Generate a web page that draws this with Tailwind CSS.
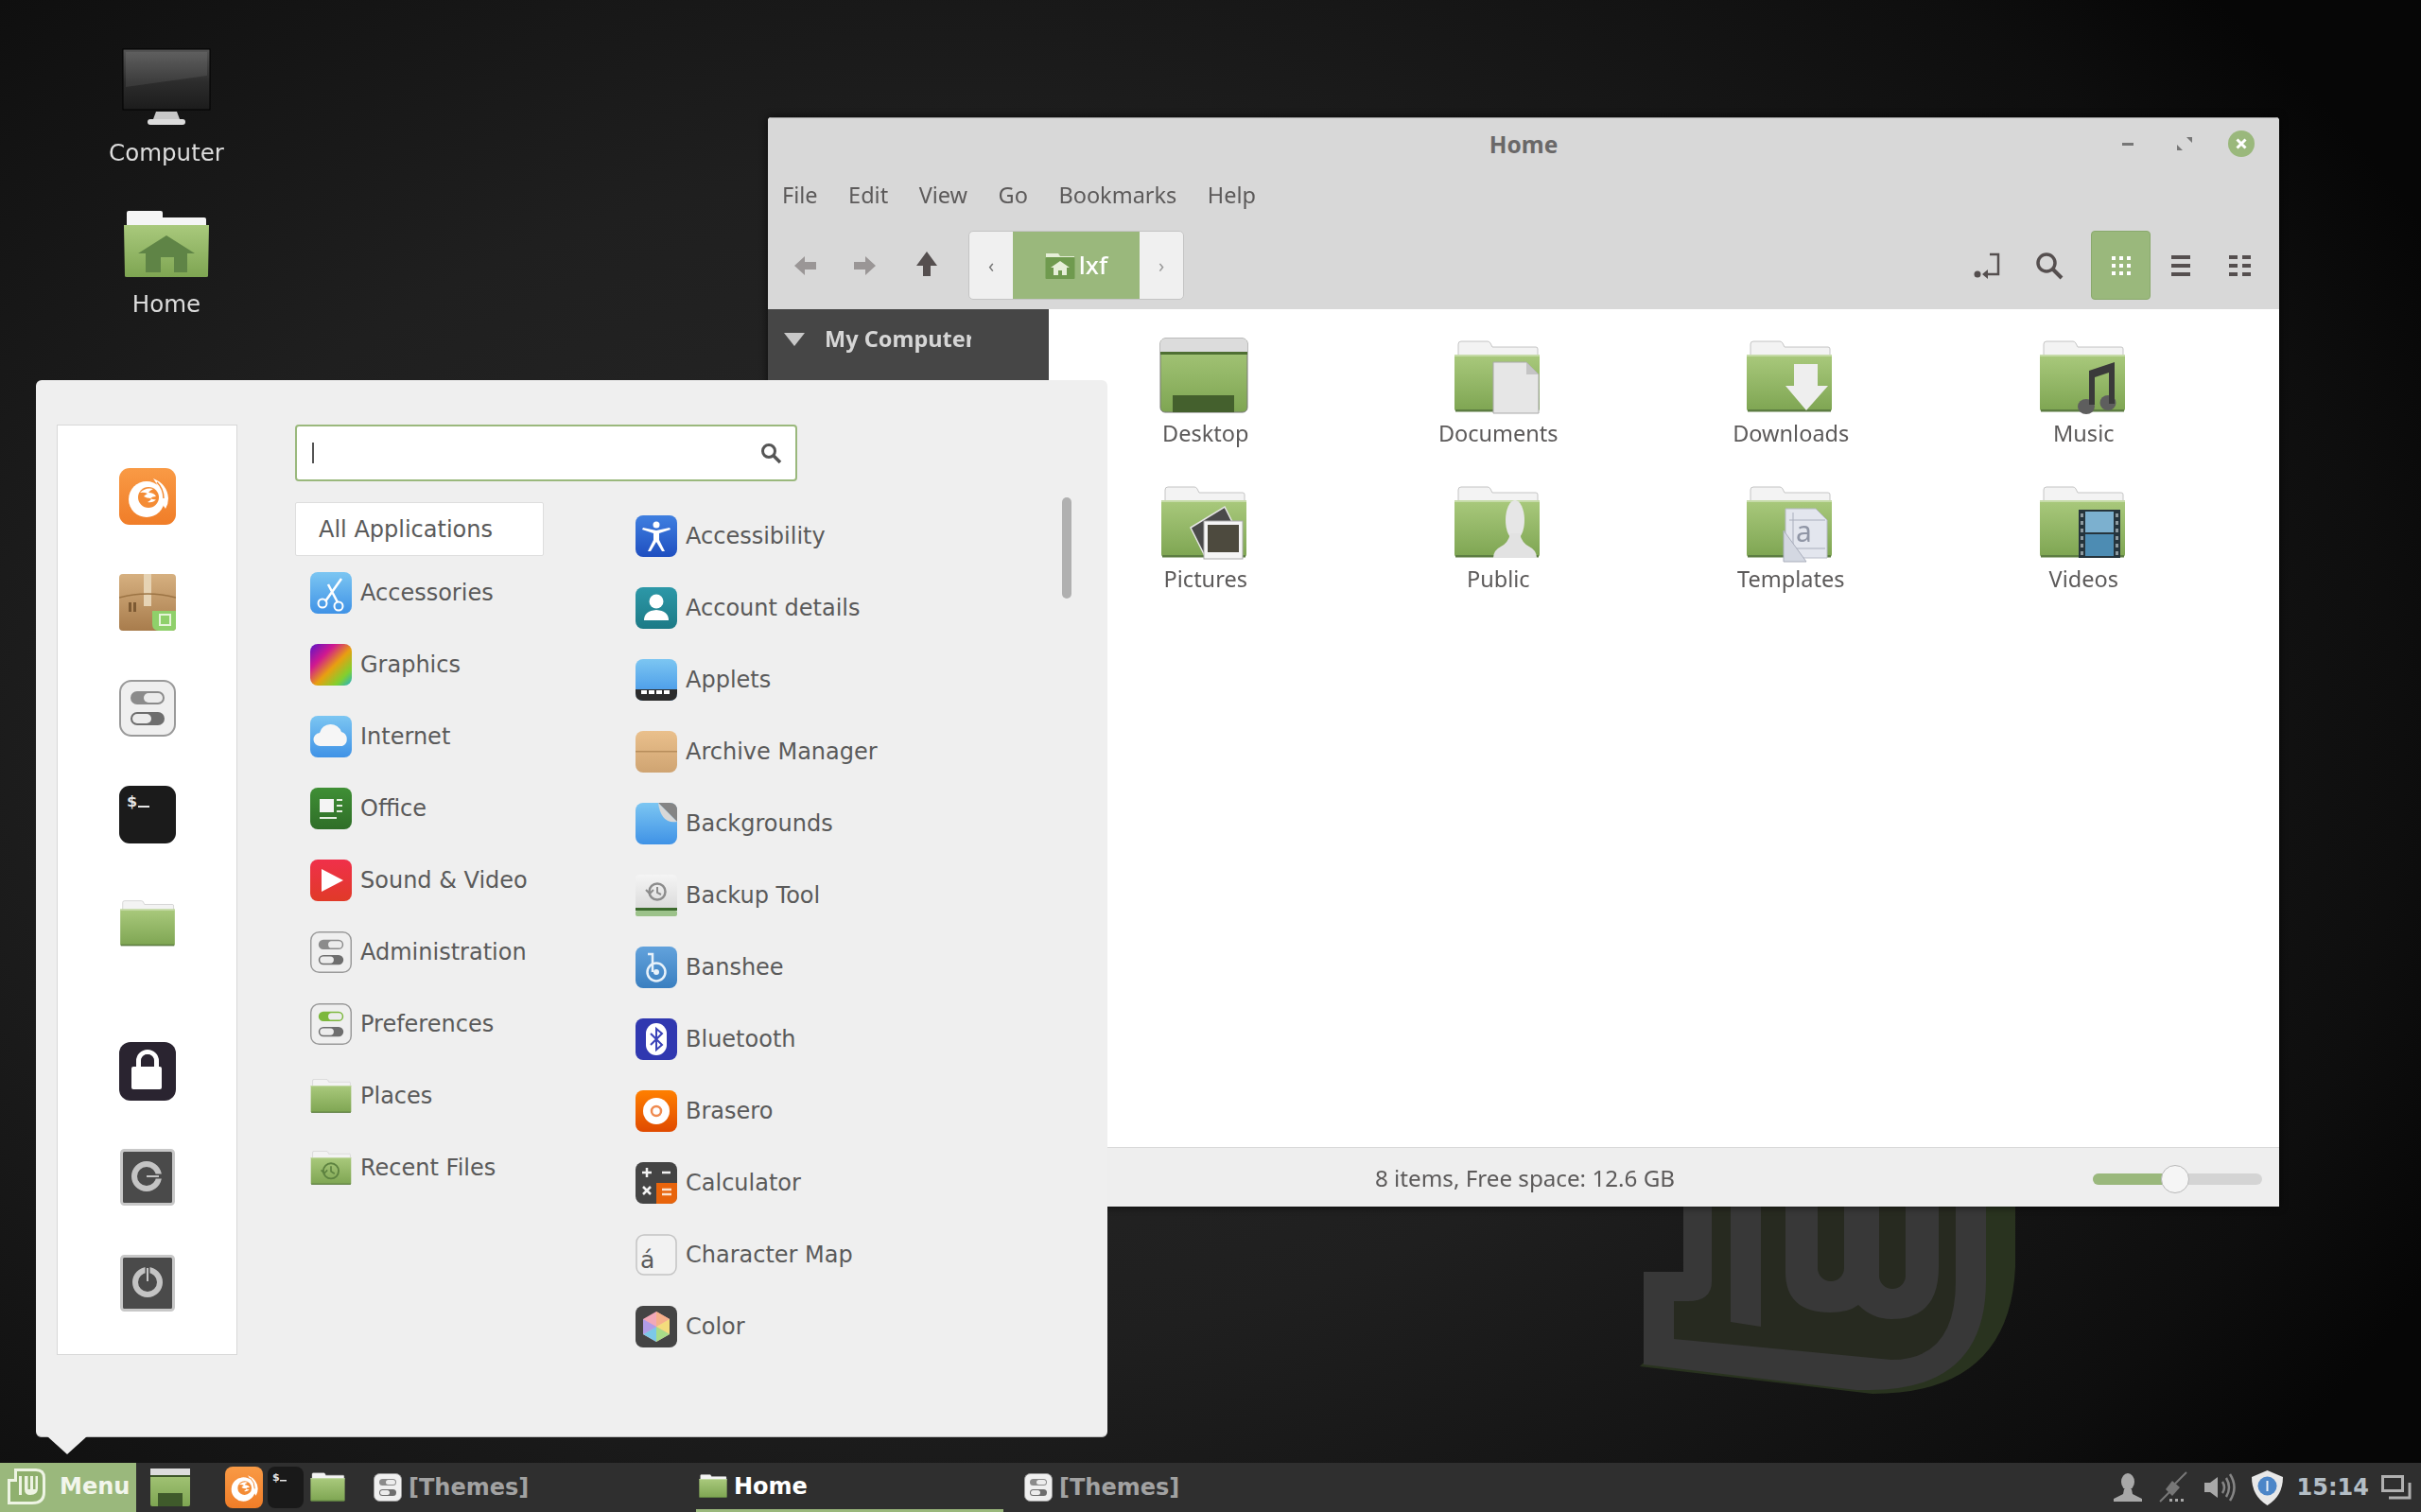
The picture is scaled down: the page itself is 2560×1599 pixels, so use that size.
<!DOCTYPE html>
<html lang="en">
<head>
  <meta charset="UTF-8">
  <title>Linux Mint desktop</title>
  <script src="https://cdn.jsdelivr.net/npm/@tailwindcss/browser@4"></script>
</head>
<body class="bg-black">
  <!-- shared gradients and symbols -->
  <svg class="absolute w-0 h-0">
    <defs>
      <linearGradient id="green" x1="0" y1="0" x2="0" y2="1"><stop offset="0" stop-color="#a9c97c"/><stop offset="1" stop-color="#7ea552"/></linearGradient>
      <linearGradient id="sky" x1="0" y1="0" x2="0" y2="1"><stop offset="0" stop-color="#7cc6f2"/><stop offset="1" stop-color="#3f92e6"/></linearGradient>
      <linearGradient id="deep" x1="0" y1="0" x2="0" y2="1"><stop offset="0" stop-color="#3f7fe0"/><stop offset="1" stop-color="#1f4fc0"/></linearGradient>
      <linearGradient id="teal" x1="0" y1="0" x2="0" y2="1"><stop offset="0" stop-color="#2d98a8"/><stop offset="1" stop-color="#1c7a86"/></linearGradient>
      <linearGradient id="box" x1="0" y1="0" x2="0" y2="1"><stop offset="0" stop-color="#eac08c"/><stop offset="1" stop-color="#cfa472"/></linearGradient>
      <linearGradient id="cardboard" x1="0" y1="0" x2="0" y2="1"><stop offset="0" stop-color="#d6b080"/><stop offset="1" stop-color="#a87c4c"/></linearGradient>
      <linearGradient id="orange" x1="0" y1="0" x2="0" y2="1"><stop offset="0" stop-color="#f99a45"/><stop offset="1" stop-color="#f07d28"/></linearGradient>
      <linearGradient id="burn" x1="0" y1="0" x2="0" y2="1"><stop offset="0" stop-color="#ff8000"/><stop offset="1" stop-color="#e04a00"/></linearGradient>
      <linearGradient id="red" x1="0" y1="0" x2="0" y2="1"><stop offset="0" stop-color="#f0304a"/><stop offset="1" stop-color="#e03a28"/></linearGradient>
      <linearGradient id="office" x1="0" y1="0" x2="0" y2="1"><stop offset="0" stop-color="#3f8f35"/><stop offset="1" stop-color="#2f6e28"/></linearGradient>
      <linearGradient id="ban" x1="0" y1="0" x2="0" y2="1"><stop offset="0" stop-color="#62a2dc"/><stop offset="1" stop-color="#3a7fc0"/></linearGradient>
      <linearGradient id="paper" x1="0" y1="0" x2="0" y2="1"><stop offset="0" stop-color="#f4f4f4"/><stop offset="1" stop-color="#d6d6d6"/></linearGradient>
      <linearGradient id="screen" x1="0" y1="0" x2="0" y2="1"><stop offset="0" stop-color="#555"/><stop offset="0.55" stop-color="#2c2c2c"/><stop offset="1" stop-color="#1c1c1c"/></linearGradient>
      <linearGradient id="rainbow" x1="0" y1="0" x2="1" y2="1"><stop offset="0" stop-color="#5a14c8"/><stop offset="0.3" stop-color="#d01890"/><stop offset="0.55" stop-color="#e8a010"/><stop offset="0.8" stop-color="#80d030"/><stop offset="1" stop-color="#20b0d0"/></linearGradient>
      <symbol id="fld" viewBox="0 0 92 78">
        <path d="M5 20V4q0-3 3-3h28q2 0 3 2l2 4h46q2 0 2 2v12z" fill="#f3f3f3" stroke="#c4c4c4"/>
        <path d="M1 15h90v57q0 3-3 3H4q-3 0-3-3z" fill="url(#green)"/>
        <rect x="1" y="15" width="90" height="2" fill="#c6dba8"/>
        <rect x="2" y="73" width="88" height="2.5" fill="#5d7d42"/>
      </symbol>
      <symbol id="toggles" viewBox="0 0 60 60">
        <rect x="1" y="1" width="58" height="58" rx="12" fill="#efefef" stroke="#9a9a9a" stroke-width="2"/>
        <rect x="12" y="12" width="36" height="14" rx="7" fill="#8b8b8b"/><rect x="26" y="14" width="20" height="10" rx="5" fill="#ececec"/>
        <rect x="12" y="34" width="36" height="14" rx="7" fill="#6e6e6e"/><rect x="14" y="36" width="20" height="10" rx="5" fill="#ececec"/>
      </symbol>
      <symbol id="firefox" viewBox="0 0 60 60">
        <circle cx="29" cy="33" r="19" fill="#fff"/>
        <path d="M36 11q15 6 16 21 0 6-3 11-3-4-5-8 1-12-8-24z" fill="#fff"/>
        <path d="M40 15q7 7 7 17" fill="none" stroke="#f48c35" stroke-width="1.500"/>
        <circle cx="31" cy="31" r="11" fill="#f48c35"/>
        <path d="M22 26q6-6 14-4-4 2-5 4 6 0 8 4-4 0-6 2 4 2 6 1-3 4-9 3 4-2 4-4-5 0-8-2 2-2 4-3-4-2-8-1z" fill="#fff"/>
      </symbol>
    </defs>
  </svg>

  <div class="relative w-[2560px] h-[1599px] overflow-hidden flex flex-col font-['DejaVu_Sans',sans-serif] blur-[0.5px]">
    <!-- desktop -->
    <div class="relative flex-1 bg-[radial-gradient(ellipse_1750px_1250px_at_1000px_800px,#2a2a2a_0%,#1f1f1f_50%,#0e0e0e_88%,#060606_100%)]">
      <!-- wallpaper logo, only its lower part shows under the window -->
      <svg class="absolute left-[1710px] top-[1270px]" width="440" height="220" viewBox="0 0 440 220">
        <path d="M390 0h31v70q-6 134-151 134L24 175l4-4 362-165z" fill="#29331f"/>
        <path d="M70 0v75H28v98l225 27h14q123 0 123-115V0z" fill="#383838"/>
        <path d="M100 0v85q0 21-25 21H60v40l230 22q68 0 68-83V0z" fill="#272a20"/>
        <path d="M120 0h32v133l-32-5z" fill="#383838"/>
        <path d="M178 0v75q0 43 47 43 20 0 30-8 15 15 35 15 50 0 50-55V0z" fill="#383838"/>
        <path d="M212 0h28v71a14 14 0 0 1-28 0zM277 0h28v79a14 14 0 0 1-28 0z" fill="#272a20"/>
      </svg>

      <!-- desktop icons -->
      <div class="absolute left-[76px] top-[50px] w-[200px] flex flex-col items-center text-[24.5px] leading-[30px] text-[#dddddd]">
        <svg class="w-[94px] h-[84px]" viewBox="0 0 94 84">
          <rect x="1" y="2" width="92" height="64" fill="url(#screen)" stroke="#000"/>
          <path d="M4 5h86v25L4 42z" fill="#fff" opacity=".08"/>
          <path d="M36 68h22l3 8H33z" fill="#c8c8c8"/><rect x="27" y="76" width="40" height="6" rx="3" fill="#dcdcdc"/>
        </svg>
        <span class="mt-[13px]">Computer</span>
        <svg class="w-[92px] h-[72px] mt-[45px]" viewBox="0 0 92 72">
          <path d="M4 18V3q0-2 2-2h34q2 0 2 2v5h44q2 0 2 2v8z" fill="#f5f5f5"/>
          <path d="M1 16h90l-1 54q0 1-2 1H4q-2 0-2-1z" fill="url(#green)"/>
          <path d="M46 27 76 46H68V66H54V50H40V66H24V46H16z" fill="#5f8446"/>
        </svg>
        <span class="mt-[13px]">Home</span>
      </div>

      <!-- file manager window -->
      <div class="absolute left-[812px] top-[124px] w-[1598px] h-[1152px] flex flex-col rounded-t-[4px] overflow-hidden bg-white font-['Noto_Sans',sans-serif] text-[23.5px] text-[#5c5a5a] shadow-[0_0_8px_rgba(0,0,0,0.7)]">
        <div class="bg-[#d8d8d8] border-t border-[#9a9a9a] h-[203px] shrink-0 flex flex-col">
          <div class="h-[59px] grid grid-cols-[1fr_auto_1fr] items-center">
            <div></div>
            <div class="font-bold text-[24.5px] text-[#6a6868] -mt-[2px]">Home</div>
            <div class="flex justify-end items-center gap-[32px] pr-[26px] -mt-[6px]">
              <svg class="w-[28px] h-[28px]" viewBox="0 0 28 28"><rect x="8" y="13" width="12" height="3" fill="#777"/></svg>
              <svg class="w-[28px] h-[28px]" viewBox="0 0 28 28"><path d="M16 7h6v6zM12 21H6v-6z" fill="#777"/></svg>
              <svg class="w-[28px] h-[28px]" viewBox="0 0 28 28"><circle cx="14" cy="14" r="14" fill="#9ab87c"/><path d="M9.500 9.500 18.500 18.500M18.500 9.500 9.500 18.500" stroke="#fff" stroke-width="3"/></svg>
            </div>
          </div>
          <div class="h-[46px] flex items-center gap-[32.500px] pl-[15px]">
            <span>File</span><span>Edit</span><span>View</span><span>Go</span><span>Bookmarks</span><span>Help</span>
          </div>
          <div class="h-[97px] flex items-start pt-[14px]">
            <div class="flex items-center h-[73px] pl-[20px]">
              <svg class="w-[36px] h-[36px]" viewBox="0 0 36 36"><path d="M8 18 19 8v6h12v8H19v6z" fill="#9a9696"/></svg>
              <svg class="w-[36px] h-[36px] ml-[30px]" viewBox="0 0 36 36"><path d="M28 18 17 8v6H5v8h12v6z" fill="#9a9696"/></svg>
              <svg class="w-[36px] h-[36px] ml-[27.500px] -mt-[3px]" viewBox="0 0 36 36"><path d="M18 5 29 20h-7v11h-8V20H7z" fill="#554f4f"/></svg>
            </div>
            <div class="ml-[26.500px] w-[228px] h-[73px] flex rounded-[5px] border border-[#c4c4c4] bg-[#f0f0f0] overflow-hidden">
              <div class="w-[46px] flex items-center justify-center text-[#777] text-[20px]">‹</div>
              <div class="w-[134px] bg-[#9ab87c] flex items-center justify-center gap-[4px] text-white font-medium text-[26px]">
                <svg class="w-[32px] h-[30px]" viewBox="0 0 32 30"><path d="M1 7V2h13l2 3h15v3z" fill="#e6efd8"/><rect x="0.500" y="6" width="31" height="23" rx="1" fill="#6f9a4e"/><path d="M16 10 26 17h-3v8h-5v-5h-4v5H9v-8H6z" fill="#e6efd8"/></svg>
                <span>lxf</span>
              </div>
              <div class="flex-1 flex items-center justify-center text-[#999] text-[20px]">›</div>
            </div>
            <div class="ml-auto flex pr-[10px] h-[73px] items-center">
              <div class="w-[63px] flex justify-center"><svg class="w-[32px] h-[36px] -ml-[4px]" viewBox="0 0 32 36"><circle cx="5" cy="27" r="3.500" fill="#554f4f"/><path d="M18 6h9v21H14" fill="none" stroke="#554f4f" stroke-width="2.500"/><path d="M10 27l6-5v10z" fill="#554f4f"/></svg></div>
              <div class="w-[63px] flex justify-center"><svg class="w-[32px] h-[32px]" viewBox="0 0 32 32"><circle cx="13" cy="13" r="9" fill="none" stroke="#554f4f" stroke-width="3.500"/><path d="m20 20 9 9" stroke="#554f4f" stroke-width="4"/></svg></div>
              <div class="w-[63px] h-[73px] ml-[13px] rounded-[4px] bg-[#9ab87c] border border-[#8aa96d] flex items-center justify-center">
                <svg class="w-[24px] h-[24px]" viewBox="0 0 24 24" fill="#fff"><path d="M2 2h4v4H2zM10 2h4v4h-4zM18 2h4v4h-4zM2 10h4v4H2zM10 10h4v4h-4zM18 10h4v4h-4zM2 18h4v4H2zM10 18h4v4h-4zM18 18h4v4h-4z"/></svg>
              </div>
              <div class="w-[63px] flex justify-center"><svg class="w-[24px] h-[24px]" viewBox="0 0 24 24" fill="#554f4f"><path d="M2 1h20v4H2zM2 10h20v4H2zM2 19h20v4H2z"/></svg></div>
              <div class="w-[63px] flex justify-center"><svg class="w-[26px] h-[24px]" viewBox="0 0 26 24" fill="#554f4f"><path d="M1 1h9v4H1zM15 1h9v4h-9zM1 10h9v4H1zM15 10h9v4h-9zM1 19h9v4H1zM15 19h9v4h-9z"/></svg></div>
            </div>
          </div>
        </div>

        <div class="flex-1 flex min-h-0">
          <div class="w-[297px] shrink-0 bg-[#464646] pt-[15px] pl-[17px] flex items-start gap-[21px]">
            <svg class="w-[22px] h-[28px] mt-[3px]" viewBox="0 0 22 28"><path d="M0 7h22L11 21z" fill="#c8c8c8"/></svg>
            <div class="w-[155px] overflow-hidden whitespace-nowrap font-bold text-[#d6d6d6] leading-[32px]">My Computer</div>
          </div>
          <div class="flex-1 pl-[11px] pt-[33px] grid grid-cols-[repeat(4,309.500px)] auto-rows-[153.500px] text-center">
            <div class="flex flex-col items-center">
              <svg class="w-[92px] h-[78px] overflow-visible -ml-[3px]" viewBox="0 0 92 78">
                <rect x="0" y="-2" width="92" height="78" rx="5" fill="url(#green)" stroke="#777"/>
                <path d="M0 12V3q0-5 5-5h82q5 0 5 5v9z" fill="#dcdcdc"/><rect x="0" y="12" width="92" height="3" fill="#4f6f33"/>
                <rect x="13" y="58" width="65" height="18" fill="#44602d"/>
              </svg>
              <span class="mt-[3px]">Desktop</span>
            </div>
            <div class="flex flex-col items-center">
              <svg class="w-[92px] h-[78px] overflow-visible -ml-[3px]" viewBox="0 0 92 78">
                <use href="#fld" width="92" height="78"/>
                <path d="M42 23h35l13 13v41H42z" fill="#e6e6e6" stroke="#a8a8a8"/><path d="M77 23v13h13z" fill="#c4c4c4"/>
              </svg>
              <span class="mt-[3px]">Documents</span>
            </div>
            <div class="flex flex-col items-center">
              <svg class="w-[92px] h-[78px] overflow-visible -ml-[3px]" viewBox="0 0 92 78">
                <use href="#fld" width="92" height="78"/>
                <path d="M51 25h25v23h11L64 74 42 48h9z" fill="#eeeeee"/>
              </svg>
              <span class="mt-[3px]">Downloads</span>
            </div>
            <div class="flex flex-col items-center">
              <svg class="w-[92px] h-[78px] overflow-visible -ml-[3px]" viewBox="0 0 92 78">
                <use href="#fld" width="92" height="78"/>
                <ellipse cx="50" cy="70" rx="9" ry="8" fill="#5e5e5e"/><ellipse cx="73" cy="66" rx="8.500" ry="8" fill="#5e5e5e"/>
                <path d="M53 68V32l27-9v44h-6V34l-15 5v29z" fill="#3a3a3a"/>
              </svg>
              <span class="mt-[3px]">Music</span>
            </div>
            <div class="flex flex-col items-center">
              <svg class="w-[92px] h-[78px] overflow-visible -ml-[3px]" viewBox="0 0 92 78">
                <use href="#fld" width="92" height="78"/>
                <path d="M32 44 68 22l10 20-30 34z" fill="#4a4a4a" stroke="#e5e5e5" stroke-width="1.500"/>
                <rect x="46" y="37" width="41" height="40" fill="#f5f5f5" stroke="#aaa"/><rect x="50" y="41" width="33" height="29" fill="#4d4a3e"/>
              </svg>
              <span class="mt-[3px]">Pictures</span>
            </div>
            <div class="flex flex-col items-center">
              <svg class="w-[92px] h-[78px] overflow-visible -ml-[3px]" viewBox="0 0 92 78">
                <use href="#fld" width="92" height="78"/>
                <ellipse cx="65" cy="36" rx="10" ry="21" fill="#e6e6e6"/>
                <path d="M60 50h10q2 10 10 14 8 4 8 12H42q0-8 8-12 8-4 10-14z" fill="#e2e2e2"/>
              </svg>
              <span class="mt-[3px]">Public</span>
            </div>
            <div class="flex flex-col items-center">
              <svg class="w-[92px] h-[78px] overflow-visible -ml-[3px]" viewBox="0 0 92 78">
                <use href="#fld" width="92" height="78"/>
                <path d="M42 24h32l12 12v40H42z" fill="#e3e6ee" stroke="#b6bac6"/>
                <path d="M50 28v46M44 66h40M46 36h38" stroke="#a9aebc" fill="none"/>
                <text x="53" y="59" font-size="30" fill="#9096a6" font-family="Noto Sans">a</text>
                <path d="M40 47 64 80H40z" fill="#d4d8e2" stroke="#a9aebc"/>
              </svg>
              <span class="mt-[3px]">Templates</span>
            </div>
            <div class="flex flex-col items-center">
              <svg class="w-[92px] h-[78px] overflow-visible -ml-[3px]" viewBox="0 0 92 78">
                <use href="#fld" width="92" height="78"/>
                <rect x="42" y="25" width="44" height="51" fill="#26343c"/>
                <rect x="49" y="27" width="30" height="22" fill="#7cb0cf"/><rect x="49" y="51" width="30" height="23" fill="#4d8cb3"/>
                <path d="M44 29h3v4h-3zM44 37h3v4h-3zM44 45h3v4h-3zM44 53h3v4h-3zM44 61h3v4h-3zM44 69h3v4h-3zM81 29h3v4h-3zM81 37h3v4h-3zM81 45h3v4h-3zM81 53h3v4h-3zM81 61h3v4h-3zM81 69h3v4h-3z" fill="#8e9aa0"/>
              </svg>
              <span class="mt-[3px]">Videos</span>
            </div>
          </div>
        </div>

        <div class="h-[63px] shrink-0 bg-[#eeeeee] border-t border-[#d8d8d8] flex items-center pl-[642px] pr-[18px] pt-[3px]">
          <span class="text-[24.2px]">8 items, Free space: 12.6 GB</span>
          <div class="ml-auto w-[179px] h-[12px] rounded-full bg-[#d4d4d4] relative">
            <div class="h-full w-[85px] rounded-l-full bg-[#9ab87c]"></div>
            <div class="absolute left-[72px] -top-[9px] w-[30px] h-[30px] rounded-full bg-[#f5f5f5] border border-[#b8b8b8]"></div>
          </div>
        </div>
      </div>

      <!-- application menu -->
      <div class="absolute left-[38px] top-[402px] w-[1133px] h-[1118px] rounded-[6px] bg-[#efefef] border-b border-[#bbbbbb] text-[24px] text-[#5a5a5a] flex pl-[22px] pt-[47px]">
        <div class="w-[191px] h-[984px] shrink-0 bg-white border border-[#d8d8d8] pt-[19px] flex flex-col">
          <div class="h-[112px] flex items-center justify-center">
            <svg class="w-[60px] h-[60px]" viewBox="0 0 60 60">
              <rect width="60" height="60" rx="11" fill="url(#orange)"/>
              <use href="#firefox" width="60" height="60"/>
            </svg>
          </div>
          <div class="h-[112px] flex items-center justify-center">
            <svg class="w-[60px] h-[60px]" viewBox="0 0 60 60">
              <rect width="60" height="60" rx="4" fill="url(#cardboard)"/>
              <rect x="26" y="0" width="8" height="34" fill="#e6d3b4"/><path d="M0 25q30-8 60 0" fill="none" stroke="#9c7444" stroke-width="1.500"/>
              <rect x="10" y="30" width="3" height="10" fill="#7d5a33"/><rect x="15" y="30" width="3" height="10" fill="#7d5a33"/>
              <path d="M35 39h25v17q0 4-4 4H42q-7 0-7-7z" fill="#8fd06a"/><rect x="43" y="43" width="11" height="11" fill="none" stroke="#e5f4d8" stroke-width="2"/>
            </svg>
          </div>
          <div class="h-[112px] flex items-center justify-center"><svg class="w-[60px] h-[60px]"><use href="#toggles" width="60" height="60"/></svg></div>
          <div class="h-[112px] flex items-center justify-center">
            <svg class="w-[60px] h-[61px]" viewBox="0 0 60 61">
              <rect width="60" height="61" rx="11" fill="#1b1b1b"/>
              <text x="8" y="22" font-size="16" font-weight="bold" fill="#e5e5e5" font-family="DejaVu Sans">$</text><rect x="20" y="21" width="12" height="2" fill="#e5e5e5"/>
            </svg>
          </div>
          <div class="h-[112px] flex items-center justify-center"><svg class="w-[60px] h-[50px] mt-[8px]"><use href="#fld" width="60" height="50"/></svg></div>
          <div class="h-[48px]"></div>
          <div class="h-[112px] flex items-center justify-center">
            <svg class="w-[60px] h-[62px]" viewBox="0 0 60 62">
              <rect width="60" height="62" rx="12" fill="#2a2430"/>
              <path d="M18 28V20a12 12 0 0 1 24 0v8h-5v-8a7 7 0 0 0-14 0v8z" fill="#fff"/><rect x="13" y="26" width="32" height="24" rx="2" fill="#fff"/><path d="M23 26v-6a7 7 0 0 1 14 0v6z" fill="#2a2430"/>
            </svg>
          </div>
          <div class="h-[112px] flex items-center justify-center">
            <svg class="w-[58px] h-[60px]" viewBox="0 0 58 60">
              <rect x="1.500" y="1.500" width="55" height="57" rx="3" fill="#4a4a4a" stroke="#c8c8c8" stroke-width="3"/>
              <circle cx="28" cy="29" r="13" fill="none" stroke="#c4c4c4" stroke-width="6"/><path d="M27 29h17" stroke="#4a4a4a" stroke-width="5"/><path d="M28 29h13" stroke="#c4c4c4" stroke-width="2"/>
            </svg>
          </div>
          <div class="h-[112px] flex items-center justify-center">
            <svg class="w-[58px] h-[60px]" viewBox="0 0 58 60">
              <rect x="1.500" y="1.500" width="55" height="57" rx="3" fill="#4a4a4a" stroke="#c8c8c8" stroke-width="3"/>
              <circle cx="29" cy="29" r="13" fill="none" stroke="#c4c4c4" stroke-width="6"/><path d="M29 13v16" stroke="#4a4a4a" stroke-width="5"/><path d="M29 14v14" stroke="#c4c4c4" stroke-width="2"/>
            </svg>
          </div>
        </div>

        <div class="ml-[61px] w-[821px] flex flex-col">
          <div class="w-[531px] h-[60px] rounded-[4px] bg-white border-2 border-[#9ab87c] flex items-center pl-[16px] pr-[14px]">
            <span class="w-[2px] h-[22px] bg-[#555]"></span>
            <svg class="ml-auto w-[24px] h-[24px]" viewBox="0 0 24 24"><circle cx="10" cy="10" r="6.500" fill="none" stroke="#555" stroke-width="3"/><path d="m15 15 7 7" stroke="#555" stroke-width="3.500"/></svg>
          </div>
          <div class="flex mt-[20px]">
            <!-- categories -->
            <div class="w-[344px] pt-[2px] flex flex-col">
              <div class="w-[263px] h-[57px] mb-[1px] bg-white border border-[#dedede] rounded-[2px] flex items-center pl-[24px]">All Applications</div>
              <div class="h-[76px] flex items-center gap-[9px] pl-[16px]">
                <svg class="w-[44px] h-[44px]" viewBox="0 0 44 44"><rect width="44" height="44" rx="8" fill="url(#sky)"/><path d="M33 7 16 31M19 13l10 19" stroke="#fff" stroke-width="2.500"/><circle cx="13" cy="33" r="4.500" fill="none" stroke="#fff" stroke-width="2"/><circle cx="30" cy="36" r="4.500" fill="none" stroke="#fff" stroke-width="2"/></svg>
                <span>Accessories</span>
              </div>
              <div class="h-[76px] flex items-center gap-[9px] pl-[16px]">
                <svg class="w-[44px] h-[44px]" viewBox="0 0 44 44"><rect width="44" height="44" rx="8" fill="url(#rainbow)"/></svg>
                <span>Graphics</span>
              </div>
              <div class="h-[76px] flex items-center gap-[9px] pl-[16px]">
                <svg class="w-[44px] h-[44px]" viewBox="0 0 44 44"><rect width="44" height="44" rx="8" fill="url(#sky)"/><path d="M11 32a7 7 0 0 1-1-14 12 12 0 0 1 23-1 8 8 0 0 1 1 15z" fill="#f6f6f6"/></svg>
                <span>Internet</span>
              </div>
              <div class="h-[76px] flex items-center gap-[9px] pl-[16px]">
                <svg class="w-[44px] h-[44px]" viewBox="0 0 44 44"><rect width="44" height="44" rx="8" fill="url(#office)"/><rect x="10" y="12" width="15" height="14" fill="#f4f4f4"/><path d="M28 12h6v2h-6zM28 18h6v2h-6zM28 24h6v2h-6zM10 31h18v2H10z" fill="#e4efe0"/></svg>
                <span>Office</span>
              </div>
              <div class="h-[76px] flex items-center gap-[9px] pl-[16px]">
                <svg class="w-[44px] h-[44px]" viewBox="0 0 44 44"><rect width="44" height="44" rx="8" fill="url(#red)"/><path d="M12 10 35 22 12 34z" fill="#fff"/></svg>
                <span>Sound &amp; Video</span>
              </div>
              <div class="h-[76px] flex items-center gap-[9px] pl-[16px]">
                <svg class="w-[44px] h-[44px]"><use href="#toggles" width="44" height="44"/></svg>
                <span>Administration</span>
              </div>
              <div class="h-[76px] flex items-center gap-[9px] pl-[16px]">
                <svg class="w-[44px] h-[44px]" viewBox="0 0 60 60"><rect x="1" y="1" width="58" height="58" rx="12" fill="#efefef" stroke="#9a9a9a" stroke-width="2"/><rect x="12" y="12" width="36" height="14" rx="7" fill="#7cb83c"/><rect x="26" y="14" width="20" height="10" rx="5" fill="#ececec"/><rect x="12" y="34" width="36" height="14" rx="7" fill="#6e6e6e"/><rect x="14" y="36" width="20" height="10" rx="5" fill="#ececec"/></svg>
                <span>Preferences</span>
              </div>
              <div class="h-[76px] flex items-center gap-[9px] pl-[16px]">
                <svg class="w-[44px] h-[37px]"><use href="#fld" width="44" height="37"/></svg>
                <span>Places</span>
              </div>
              <div class="h-[76px] flex items-center gap-[9px] pl-[16px]">
                <svg class="w-[44px] h-[37px]" viewBox="0 0 92 78"><use href="#fld" width="92" height="78"/><circle cx="46" cy="45" r="17" fill="none" stroke="#5d8240" stroke-width="4"/><path d="M46 34v12l8 5M24 43l7 7 7-7" fill="none" stroke="#5d8240" stroke-width="3.500"/></svg>
                <span>Recent Files</span>
              </div>
            </div>
            <!-- applications -->
            <div class="flex-1 flex flex-col">
              <div class="h-[76px] flex items-center gap-[9px] pl-[16px]">
                <svg class="w-[44px] h-[44px]" viewBox="0 0 44 44"><rect width="44" height="44" rx="8" fill="url(#deep)"/><circle cx="22" cy="10" r="3.500" fill="#fff"/><path d="M7 15 19 19v7l-6 12h3l6-10 6 10h3l-6-12v-7l12-4-1-2-14 3-14-3z" fill="#fff"/></svg>
                <span>Accessibility</span>
              </div>
              <div class="h-[76px] flex items-center gap-[9px] pl-[16px]">
                <svg class="w-[44px] h-[44px]" viewBox="0 0 44 44"><rect width="44" height="44" rx="8" fill="url(#teal)"/><circle cx="22" cy="15" r="7.500" fill="#fff"/><path d="M9 35q0-10 13-11 13 1 13 11z" fill="#fff"/></svg>
                <span>Account details</span>
              </div>
              <div class="h-[76px] flex items-center gap-[9px] pl-[16px]">
                <svg class="w-[44px] h-[44px]" viewBox="0 0 44 44"><rect width="44" height="44" rx="8" fill="url(#sky)"/><path d="M0 32h44v4q0 8-8 8H8q-8 0-8-8z" fill="#2c2c2c"/><path d="M6 33h6v4H6zM14 33h6v4h-6zM22 33h6v4h-6zM30 33h6v4h-6z" fill="#fff"/></svg>
                <span>Applets</span>
              </div>
              <div class="h-[76px] flex items-center gap-[9px] pl-[16px]">
                <svg class="w-[44px] h-[44px]" viewBox="0 0 44 44"><rect width="44" height="44" rx="8" fill="url(#box)"/><rect y="21" width="44" height="1.500" fill="#b78d5c"/></svg>
                <span>Archive Manager</span>
              </div>
              <div class="h-[76px] flex items-center gap-[9px] pl-[16px]">
                <svg class="w-[44px] h-[44px]" viewBox="0 0 44 44"><rect width="44" height="44" rx="8" fill="url(#sky)"/><path d="M24 0h12q8 0 8 8v12z" fill="#858585"/><path d="M24 0 44 20q-17 3-20-20z" fill="#d8d8d8"/></svg>
                <span>Backgrounds</span>
              </div>
              <div class="h-[76px] flex items-center gap-[9px] pl-[16px]">
                <svg class="w-[44px] h-[44px]" viewBox="0 0 44 44"><rect width="44" height="44" rx="4" fill="url(#paper)"/><rect y="35" width="44" height="3" fill="#3d6b2e"/><rect y="38" width="44" height="6" rx="2" fill="#9cc28a"/><circle cx="23" cy="18" r="8.500" fill="none" stroke="#8c8c8c" stroke-width="2.500"/><path d="M23 13v6l4 2M11 16l4 4 4-4" fill="none" stroke="#8c8c8c" stroke-width="2"/></svg>
                <span>Backup Tool</span>
              </div>
              <div class="h-[76px] flex items-center gap-[9px] pl-[16px]">
                <svg class="w-[44px] h-[44px]" viewBox="0 0 44 44"><rect width="44" height="44" rx="8" fill="url(#ban)"/><circle cx="22" cy="27" r="9.500" fill="none" stroke="#e8f2fa" stroke-width="2.500"/><path d="M13 8h5v19" fill="none" stroke="#e8f2fa" stroke-width="2.500"/><circle cx="22" cy="27" r="3" fill="#e8f2fa"/></svg>
                <span>Banshee</span>
              </div>
              <div class="h-[76px] flex items-center gap-[9px] pl-[16px]">
                <svg class="w-[44px] h-[44px]" viewBox="0 0 44 44"><rect width="44" height="44" rx="8" fill="#3038b0"/><rect x="11" y="5" width="22" height="34" rx="11" fill="#fff"/><path d="m16 16 12 12-6 5V11l6 5-12 12" fill="none" stroke="#3a42b8" stroke-width="2"/></svg>
                <span>Bluetooth</span>
              </div>
              <div class="h-[76px] flex items-center gap-[9px] pl-[16px]">
                <svg class="w-[44px] h-[44px]" viewBox="0 0 44 44"><rect width="44" height="44" rx="8" fill="url(#burn)"/><circle cx="22" cy="22" r="14" fill="#fff"/><circle cx="22" cy="22" r="5" fill="none" stroke="#ef8a50" stroke-width="2.500"/></svg>
                <span>Brasero</span>
              </div>
              <div class="h-[76px] flex items-center gap-[9px] pl-[16px]">
                <svg class="w-[44px] h-[44px]" viewBox="0 0 44 44"><rect width="44" height="44" rx="8" fill="#444444"/><path d="M22 22h22v14q0 8-8 8H22z" fill="#e8640c"/><path d="M7 11h10M12 6v10M28 11h9M8 26l8 8M16 26l-8 8" stroke="#f2f2f2" stroke-width="2.500"/><path d="M28 29h10M28 34h10" stroke="#fbe3cf" stroke-width="2.500"/></svg>
                <span>Calculator</span>
              </div>
              <div class="h-[76px] flex items-center gap-[9px] pl-[16px]">
                <svg class="w-[44px] h-[44px]" viewBox="0 0 44 44"><rect x="1" y="1" width="42" height="42" rx="8" fill="#f2f2f2" stroke="#c4c4c4" stroke-width="1.500"/><text x="5" y="36" font-size="25" fill="#5a5a5a" font-family="DejaVu Sans">á</text></svg>
                <span>Character Map</span>
              </div>
              <div class="h-[76px] flex items-center gap-[9px] pl-[16px]">
                <svg class="w-[44px] h-[44px]" viewBox="0 0 44 44"><rect width="44" height="44" rx="8" fill="#444444"/><path d="M22 6 36 14v16l-14 8-14-8V14z" fill="#f2a8b8"/><path d="M22 22 22 6 36 14z" fill="#f6b08a"/><path d="M22 22 36 14v16z" fill="#f3dc7c"/><path d="M22 22 36 30 22 38z" fill="#a8dc88"/><path d="M22 22 22 38 8 30z" fill="#7cc8e8"/><path d="M22 22 8 30V14z" fill="#b09ce8"/></svg>
                <span>Color</span>
              </div>
            </div>
            <div class="w-[10px] h-[107px] -mt-[3px] rounded-full bg-[#b0b0b0]"></div>
          </div>
        </div>
      </div>
      <!-- menu pointer -->
      <div class="absolute left-[50px] top-[1519px] w-0 h-0 border-x-[21px] border-x-transparent border-t-[19px] border-t-[#efefef]"></div>
    </div>

    <!-- panel -->
    <div class="h-[52px] shrink-0 bg-[#2f2f2f] flex items-center text-[24px] font-bold text-[#a2a2a2]">
      <div class="w-[144px] h-[54px] -mt-[2px] bg-[#9ab87c] flex items-center pl-[7px] gap-[14px] text-[#f2f6ec]">
        <svg class="w-[42px] h-[40px]" viewBox="0 0 42 40">
          <path d="M1 12H8V1H31Q41 1 41 11V26Q41 39 27 39H1Z" fill="#eef4e4"/>
          <path d="M11 4V15H4V36H27Q38 36 38 26V11Q38 4 31 4Z" fill="#8fb06e"/>
          <path d="M13 9h3v20h-3zM19 9V23Q19 29 25 29 33 29 33 22V9Z" fill="#eef4e4"/>
          <path d="M22.500 9h2.500v14h-2.500zM28 9h2.500v14H28z" fill="#8fb06e"/>
        </svg>
        <span>Menu</span>
      </div>
      <svg class="ml-[14px] w-[44px] h-[40px]" viewBox="0 0 44 40"><rect x="1" width="42" height="40" rx="2" fill="url(#green)"/><rect x="1" width="42" height="7" fill="#dcdcdc"/><rect x="1" y="7" width="42" height="2" fill="#3c5528"/><rect x="9" y="26" width="26" height="14" fill="#3f5a2b"/></svg>
      <svg class="ml-[36px] w-[40px] h-[44px]" viewBox="0 0 60 66"><rect width="60" height="66" rx="12" fill="url(#orange)"/><use href="#firefox" y="3" width="60" height="60"/></svg>
      <svg class="ml-[5px] w-[38px] h-[44px]" viewBox="0 0 38 44"><rect width="38" height="44" rx="8" fill="#191919"/><text x="5" y="15" font-size="11" fill="#e5e5e5" font-family="DejaVu Sans">$</text><rect x="13" y="14" width="7" height="1.500" fill="#e5e5e5"/></svg>
      <svg class="ml-[7px] w-[37px] h-[38px]"><use href="#fld" width="37" height="38"/></svg>
      <div class="ml-[26px] w-[325px] h-full flex items-center pl-[4px] gap-[7px]">
        <svg class="w-[30px] h-[30px]"><use href="#toggles" width="30" height="30"/></svg>
        <span>[Themes]</span>
      </div>
      <div class="ml-[20px] w-[325px] h-full flex items-center pl-[3px] gap-[7px] border-b-[3px] border-[#9ab87c] text-white">
        <svg class="w-[30px] h-[30px]"><use href="#fld" width="30" height="30"/></svg>
        <span>Home</span>
      </div>
      <div class="ml-[20px] h-full flex items-center pl-[2px] gap-[7px]">
        <svg class="w-[30px] h-[30px]"><use href="#toggles" width="30" height="30"/></svg>
        <span>[Themes]</span>
      </div>
      <div class="ml-auto flex items-center pr-[10px]">
        <svg class="w-[32px] h-[32px]" viewBox="0 0 32 32"><ellipse cx="16" cy="10" rx="7" ry="9" fill="#a8a8a8"/><path d="M12 18h8l1 5 10 5v3H1v-3l10-5z" fill="#a8a8a8"/></svg>
        <svg class="ml-[15px] w-[34px] h-[34px]" viewBox="0 0 34 34"><path d="M31 1 19 13M14 21 3 32" stroke="#777" stroke-width="2" fill="none"/><path d="m16 10 8 7-8 9-7-7z" fill="#777"/><path d="M13 29h3v3h-3zM19 29h3v3h-3zM25 29h3v3h-3z" fill="#a8a8a8"/></svg>
        <svg class="ml-[15px] w-[34px] h-[34px]" viewBox="0 0 34 34"><path d="M1 12h6l8-6v22l-8-6H1z" fill="#a8a8a8"/><path d="M20 11q4 6 0 12M24 7q6 10 0 20M28 3q9 14 0 28" fill="none" stroke="#858585" stroke-width="2.500"/></svg>
        <svg class="ml-[17px] w-[33px] h-[37px]" viewBox="0 0 33 37"><path d="M16.500 0 33 7q0 20-16.500 30Q0 27 0 7z" fill="#e8e8e8"/><circle cx="16.500" cy="16.500" r="10" fill="#4c86c8"/><rect x="15.500" y="11" width="2" height="11" fill="#e8eef6"/></svg>
        <span class="ml-[15px] text-[#b4bec6]">15:14</span>
        <svg class="ml-[13px] w-[32px] h-[26px]" viewBox="0 0 32 26"><rect x="1.500" y="1.500" width="21" height="15" fill="none" stroke="#b0b0b0" stroke-width="3"/><path d="M30 8v16H8" fill="none" stroke="#b0b0b0" stroke-width="3"/></svg>
      </div>
    </div>
  </div>
</body>
</html>
